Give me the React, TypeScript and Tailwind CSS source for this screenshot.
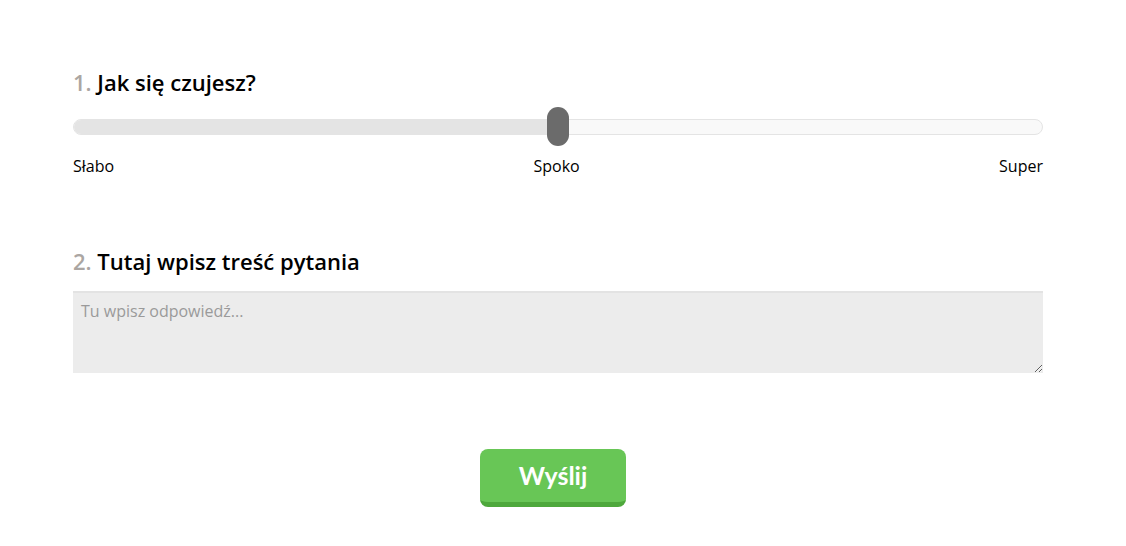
import { useState } from "react";

const labels = ["Słabo", "Spoko", "Super"];

const Question = ({ num, title }: { num: number; title: string }) => (
    <h2 className="text-[22px] leading-[30px] font-semibold text-black">
        <span className="text-[#aba6a2]">{num}.</span> {title}
    </h2>
);

const App = () => {
    const [value] = useState(50);
    const [answer, setAnswer] = useState("");

    return (
        <div className="min-h-[546px] w-full bg-white font-['Open_Sans',sans-serif]">
            <div className="ml-[73px] w-[970px] pt-[67px]">
                <Question num={1} title="Jak się czujesz?" />
                <div className="relative mt-[10px] flex h-[39px] items-center">
                    <div className="relative h-[16px] w-full overflow-hidden rounded-full border border-[#e4e4e4] bg-[#f9f9f9]">
                        <div className="h-full bg-[#e4e4e4]" style={{ width: `${value}%` }} />
                    </div>
                    <div
                        className="absolute top-0 h-[39px] w-[22px] -translate-x-1/2 rounded-full bg-[#6b6b6b]"
                        style={{ left: `${value}%` }}
                    />
                </div>
                <div className="mt-[8px] flex justify-between text-[16px] leading-[24px] text-black">
                    {labels.map((l) => (
                        <span key={l}>{l}</span>
                    ))}
                </div>

                <div className="mt-[68px]">
                    <Question num={2} title="Tutaj wpisz treść pytania" />
                </div>
                <textarea
                    className="mt-[15px] block h-[82px] w-full border-t-2 border-[#e3e3e3] bg-[#ececec] px-[8px] pt-[6px] text-[16px] leading-[24px] text-[#555] outline-none placeholder:text-[#9a9a9a]"
                    placeholder="Tu wpisz odpowiedź..."
                    value={answer}
                    onChange={({ target: { value } }) => setAnswer(value)}
                />

                <div className="mt-[76px] flex justify-center pr-[10px]">
                    <button className="h-[58px] w-[146px] rounded-lg border-b-[5px] border-[#4ea83c] bg-[#68c656] font-['Lato',sans-serif] text-[25px] font-bold text-white">
                        Wyślij
                    </button>
                </div>
            </div>
        </div>
    );
};

export default App;
